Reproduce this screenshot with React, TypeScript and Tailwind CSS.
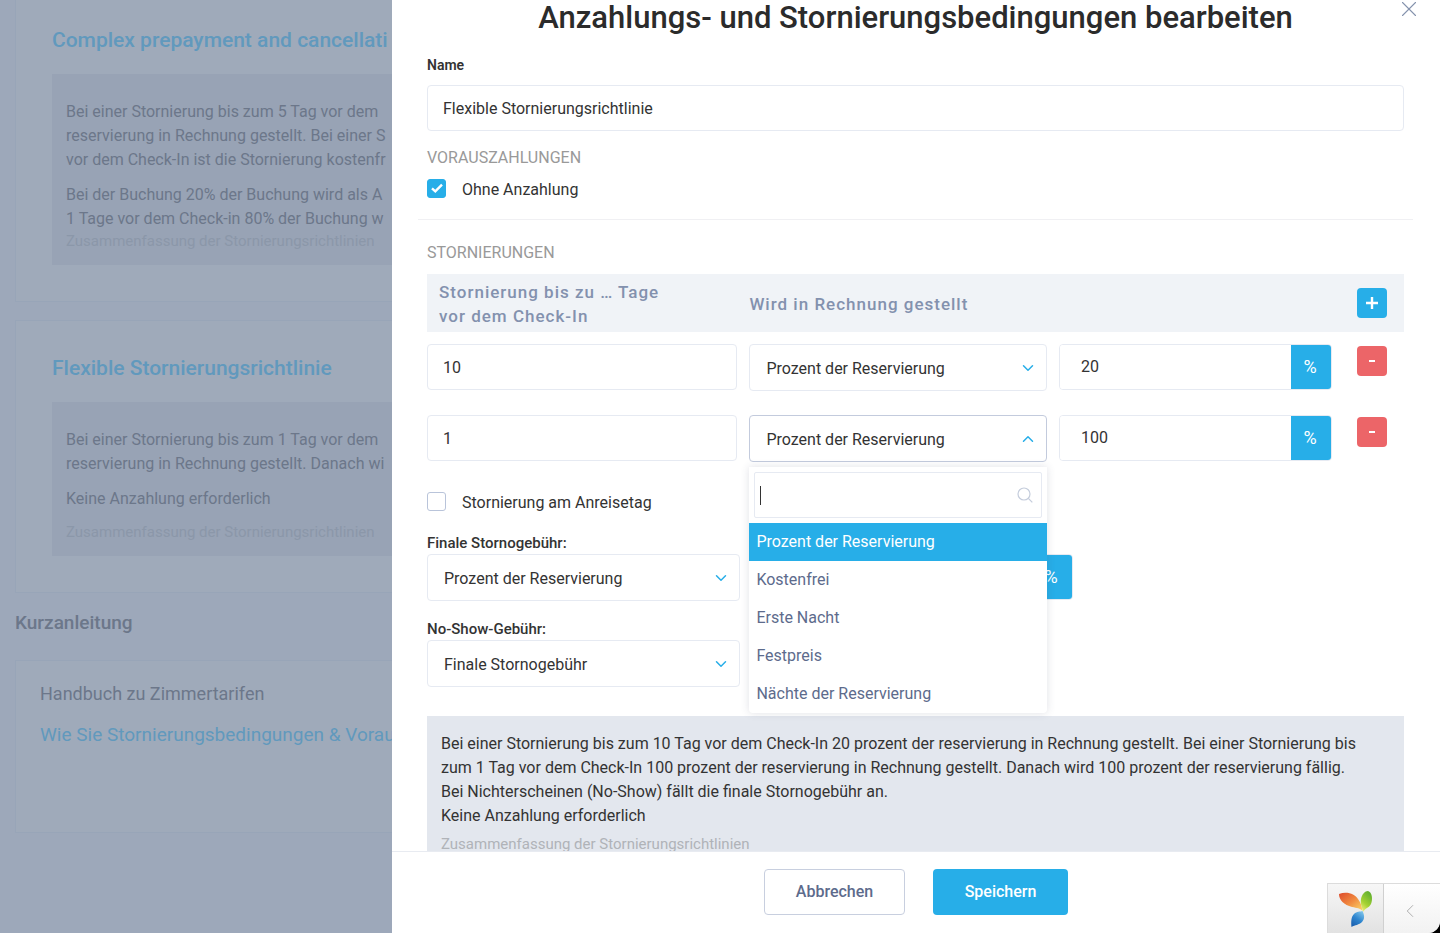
import { ReactNode } from 'react';
import { ChevronDown, ChevronLeft, ChevronUp, X } from 'lucide-react';
import clsx from 'clsx';

const feeTypes = [
  'Prozent der Reservierung',
  'Kostenfrei',
  'Erste Nacht',
  'Festpreis',
  'Nächte der Reservierung',
];

const cancellationRules = [
  { days: '10', amount: '20', open: false },
  { days: '1', amount: '100', open: true },
];

const inputClass =
  'h-[46px] w-full rounded-[4px] border border-[#e6eaf2] bg-white px-[15px] text-base text-[#333] outline-none';

// Select with its own chevron
const SelectBox = ({
  id,
  label,
  options,
  open = false,
}: {
  id: string;
  label?: string;
  options: string[];
  open?: boolean;
}) => (
  <div className="relative">
    <select
      id={id}
      aria-label={label}
      className={clsx(
        'block h-[47px] w-full appearance-none rounded-[4px] border bg-white pt-[2px] pr-10 pl-4 text-base text-[#333] outline-none',
        open ? 'border-[#c3cbdd]' : 'border-[#e6eaf2]'
      )}
    >
      {options.map((option) => (
        <option key={option}>{option}</option>
      ))}
    </select>
    <span className="pointer-events-none absolute inset-y-0 right-[10px] flex items-center text-[#27aee8]">
      {open ? <ChevronUp size={18} strokeWidth={2} /> : <ChevronDown size={18} strokeWidth={2} />}
    </span>
  </div>
);

const PercentInput = ({ label, value }: { label: string; value: string }) => (
  <div className="flex h-[46px] overflow-hidden rounded-[4px] border border-[#e6eaf2]">
    <input
      type="text"
      aria-label={label}
      defaultValue={value}
      className="min-w-0 flex-1 bg-white px-[21px] text-base text-[#333] outline-none"
    />
    <span className="flex w-10 shrink-0 items-center justify-center bg-[#27aee8] pr-[2px] text-lg text-white">%</span>
  </div>
);

const SearchIcon = () => (
  <svg width="16" height="16" viewBox="0 0 16 16" fill="none" stroke="#c5cddc" strokeWidth="1.2">
    <circle cx="7" cy="7" r="6" />
    <path d="M11.3 11.3 15.3 15.3" />
  </svg>
);

// Dropdown list of the opened fee select
const FeeDropdown = () => (
  <div className="absolute top-full right-3 left-0 z-10 -mt-[7px] rounded-b bg-white pt-[5px] shadow-[0_0_8px_rgba(60,70,100,0.16)]">
    <div className="relative mx-[5px] mb-[5px]">
      <input
        type="text"
        aria-label="Suche"
        className="block h-[46px] w-full rounded-[2px] border border-[#e6eaf2] bg-white pr-10 pl-[5px] text-base text-[#333] outline-none"
      />
      <span className="absolute top-[14px] left-[6px] h-[19px] w-px bg-[#333]" />
      <span className="absolute inset-y-0 right-[9px] flex items-center">
        <SearchIcon />
      </span>
    </div>
    <ul role="listbox">
      {feeTypes.map((type, i) => (
        <li
          key={type}
          role="option"
          aria-selected={i === 0}
          className={clsx(
            'flex h-[38px] items-center px-[7px] text-base',
            i === 0 ? 'bg-[#27aee8] text-white' : 'text-[#5d6b8c]'
          )}
        >
          {type}
        </li>
      ))}
    </ul>
  </div>
);

const Checkbox = ({ id, label, checked = false }: { id: string; label: string; checked?: boolean }) => (
  <div className="flex h-6 items-center gap-4">
    <span className="relative flex size-[19px] shrink-0">
      <input
        id={id}
        type="checkbox"
        defaultChecked={checked}
        className="peer size-[19px] appearance-none rounded-[3px] border border-[#b9c4da] bg-white checked:border-[#27aee8] checked:bg-[#27aee8]"
      />
      <svg
        viewBox="0 0 19 19"
        className="pointer-events-none absolute inset-0 hidden size-[19px] peer-checked:block"
        fill="none"
        stroke="#fff"
        strokeWidth="2.4"
      >
        <path d="M5 9.4 8.3 12.4 15 5.6" />
      </svg>
    </span>
    <label htmlFor={id} className="pt-1 text-base text-[#333]">
      {label}
    </label>
  </div>
);

const PolicyCard = ({ title, className, children }: { title: string; className: string; children: ReactNode }) => (
  <article className={clsx('border border-r-0 border-[#98a5b8] bg-[#9faaba] pl-9', className)}>
    <h3 className="text-[21px] leading-6 font-medium">
      <a href="#" className="text-[#6199bd]">
        {title}
      </a>
    </h3>
    {children}
  </article>
);

// Page behind the drawer, already tinted by the backdrop
const PageBehind = () => (
  <main className="w-[392px] shrink-0 overflow-hidden bg-[#9da8ba] pl-[15px] whitespace-nowrap text-[#6c778a]">
    <PolicyCard title="Complex prepayment and cancellati" className="h-[302px] border-t-0 pt-7">
      <div className="mt-[22px] h-[191px] bg-[#98a3b5] pt-[26px] pl-[14px] text-base leading-6">
        <p>
          Bei einer Stornierung bis zum 5 Tag vor dem
          <br />
          reservierung in Rechnung gestellt. Bei einer S
          <br />
          vor dem Check-In ist die Stornierung kostenfr
        </p>
        <p className="mt-[11px]">
          Bei der Buchung 20% der Buchung wird als A
          <br />1 Tage vor dem Check-in 80% der Buchung w
        </p>
        <p className="text-[15px] leading-5 text-[#8b97a9]">Zusammenfassung der Stornierungsrichtlinien</p>
      </div>
    </PolicyCard>

    <PolicyCard title="Flexible Stornierungsrichtlinie" className="mt-[18px] h-[273px] pt-[35px]">
      <div className="mt-[22px] h-[154px] bg-[#98a3b5] pt-[26px] pl-[14px] text-base leading-6">
        <p>
          Bei einer Stornierung bis zum 1 Tag vor dem
          <br />
          reservierung in Rechnung gestellt. Danach wi
        </p>
        <p className="mt-[11px]">Keine Anzahlung erforderlich</p>
        <p className="mt-[11px] text-[15px] leading-5 text-[#8b97a9]">Zusammenfassung der Stornierungsrichtlinien</p>
      </div>
    </PolicyCard>

    <h2 className="mt-[18px] text-[19px] leading-6 font-medium">Kurzanleitung</h2>
    <section className="mt-[25px] h-[173px] border border-r-0 border-[#98a5b8] bg-[#9faaba] pt-[21px] pl-6 text-lg leading-6">
      <p>Handbuch zu Zimmertarifen</p>
      <a href="#" className="mt-[17px] block text-[19px] text-[#6199bd]">
        Wie Sie Stornierungsbedingungen &amp; Vorau
      </a>
    </section>
  </main>
);

const YiiLogo = () => (
  <svg width="34" height="36" viewBox="0 0 34 36">
    <defs>
      <linearGradient id="yii-orange" x1="0" y1="0" x2="1" y2="1">
        <stop offset="0" stopColor="#dd4a2b" />
        <stop offset="0.5" stopColor="#f0893f" />
        <stop offset="1" stopColor="#fbd96b" />
      </linearGradient>
      <linearGradient id="yii-green" x1="0.7" y1="0" x2="0.2" y2="1">
        <stop offset="0" stopColor="#5fae2e" />
        <stop offset="0.6" stopColor="#a5d233" />
        <stop offset="1" stopColor="#f3ee7a" />
      </linearGradient>
      <linearGradient id="yii-blue" x1="0.8" y1="0" x2="0.2" y2="1">
        <stop offset="0" stopColor="#7fc4ea" />
        <stop offset="0.5" stopColor="#2f86cf" />
        <stop offset="1" stopColor="#1b5fae" />
      </linearGradient>
    </defs>
    <path d="M0 3C8 0 16 3 19 8C22 12 23 16 23.5 20C21 17 18 17 13 16C5 14 0 9 0 3Z" fill="url(#yii-orange)" />
    <path d="M29 0C33 1 34 8 32 13C30 17 26 17 24 21C23.500 17 21 13 22 8C23 3 26 0 29 0Z" fill="url(#yii-green)" />
    <path d="M23.500 20C25.500 24 26 28 23 31C20 34 16 34 12.500 36C12 31 12 26 15 23C18 20 21 21 23.500 20Z" fill="url(#yii-blue)" />
  </svg>
);

const DebugToolbar = () => (
  <div className="absolute right-0 bottom-0 bg-black">
    <div className="flex h-[50px] overflow-hidden rounded-br-xl border-t border-l border-[#dcdcdc] bg-white">
      <a
        href="#"
        aria-label="Yii Debugger"
        className="flex w-14 items-center justify-center border-r border-[#d0d0d0] bg-linear-to-b from-[#f7f7f7] to-[#e2e2e2]"
      >
        <YiiLogo />
      </a>
      <button
        type="button"
        aria-label="Toolbar einblenden"
        className="flex w-14 items-center justify-center bg-linear-to-b from-white to-[#f2f2f2] pt-1 pr-1 text-[#a8a8a8]"
      >
        <ChevronLeft size={22} strokeWidth={1} />
      </button>
    </div>
  </div>
);

const PolicyDrawer = () => (
  <section role="dialog" aria-labelledby="drawer-title" className="relative flex min-w-0 flex-1 flex-col bg-white">
    <button type="button" aria-label="Schließen" className="absolute -top-1 right-[18px] text-[#8593ad]">
      <X size={26} strokeWidth={1} />
    </button>

    <div className="min-h-0 flex-1 overflow-hidden pr-9 pl-[35px]">
      <h1 id="drawer-title" className="text-center text-[31px] leading-9 font-medium text-[#2b2b2b]">
        Anzahlungs- und Stornierungsbedingungen bearbeiten
      </h1>

      <label htmlFor="name" className="mt-[19px] block text-sm leading-5 font-semibold text-[#333]">
        Name
      </label>
      <input id="name" type="text" defaultValue="Flexible Stornierungsrichtlinie" className={clsx(inputClass, 'mt-[10px] block')} />

      <h2 className="mt-[15px] text-base leading-6 text-[#999] uppercase">Vorauszahlungen</h2>
      <div className="mt-[6px]">
        <Checkbox id="no-prepayment" label="Ohne Anzahlung" checked />
      </div>

      <hr className="-mx-[9px] mt-[19px] border-[#f0f0f3]" />

      <h2 className="mt-[21px] text-base leading-6 text-[#999] uppercase">Stornierungen</h2>
      <table className="mt-[9px] w-full table-fixed">
        <thead>
          <tr className="bg-[#f0f3f7] text-left text-[17px] leading-6 tracking-[1px] text-[#8391ae]">
            <th className="w-[33%] pt-[6px] pb-1 pl-3 font-medium">
              Stornierung bis zu … Tage
              <br />
              vor dem Check-In
            </th>
            <th className="pt-[2px] font-medium">Wird in Rechnung gestellt</th>
            <th className="w-[298px]" />
            <th className="w-[47px]">
              <button
                type="button"
                aria-label="Regel hinzufügen"
                className="flex size-[30px] items-center justify-center rounded-[4px] bg-[#27aee8]"
              >
                <svg width="12" height="12" viewBox="0 0 12 12" stroke="#fff" strokeWidth="2.4">
                  <path d="M6 0V12M0 6H12" />
                </svg>
              </button>
            </th>
          </tr>
        </thead>
        <tbody>
          {cancellationRules.map((rule) => (
            <tr key={rule.days} className="align-top">
              <td className="py-3 pr-3">
                <input type="text" aria-label="Tage vor dem Check-In" defaultValue={rule.days} className={inputClass} />
              </td>
              <td className="relative py-3 pr-3">
                <SelectBox id={`fee-${rule.days}`} label="Wird in Rechnung gestellt" options={feeTypes} open={rule.open} />
                {rule.open && <FeeDropdown />}
              </td>
              <td className="py-3 pr-[25px]">
                <PercentInput label="Prozentsatz" value={rule.amount} />
              </td>
              <td className="py-[14px]">
                <button
                  type="button"
                  aria-label="Regel entfernen"
                  className="flex size-[30px] items-center justify-center rounded-[4px] bg-[#ec6568]"
                >
                  <svg width="6" height="2" viewBox="0 0 6 2" stroke="#fff" strokeWidth="2">
                    <path d="M0 1H6" />
                  </svg>
                </button>
              </td>
            </tr>
          ))}
        </tbody>
      </table>

      <div className="mt-[15px]">
        <Checkbox id="arrival-day" label="Stornierung am Anreisetag" />
      </div>

      <label htmlFor="final-fee" className="mt-5 block text-[15px] leading-5 font-medium text-[#333]">
        Finale Stornogebühr:
      </label>
      <div className="mt-px flex gap-[11px]">
        <div className="w-[32%]">
          <SelectBox id="final-fee" options={feeTypes} />
        </div>
        <div className="w-[33%]">
          <PercentInput label="Finaler Prozentsatz" value="" />
        </div>
      </div>

      <label htmlFor="no-show-fee" className="mt-[18px] block text-[15px] leading-5 font-medium text-[#333]">
        No-Show-Gebühr:
      </label>
      <div className="mt-px w-[32%]">
        <SelectBox id="no-show-fee" options={['Finale Stornogebühr']} />
      </div>

      <div className="mt-[29px] bg-[#e3e7ee] px-[14px] pt-4 pb-6 text-base leading-6 text-[#333]">
        <p>
          Bei einer Stornierung bis zum 10 Tag vor dem Check-In 20 prozent der reservierung in Rechnung gestellt. Bei
          einer Stornierung bis zum 1 Tag vor dem Check-In 100 prozent der reservierung in Rechnung gestellt. Danach
          wird 100 prozent der reservierung fällig.
          <br />
          Bei Nichterscheinen (No-Show) fällt die finale Stornogebühr an.
        </p>
        <p>Keine Anzahlung erforderlich</p>
        <p className="mt-[6px] text-[15px] leading-5 text-[#b0b3b8]">Zusammenfassung der Stornierungsrichtlinien</p>
      </div>
    </div>

    <footer className="flex h-[82px] shrink-0 items-center justify-center gap-7 border-t border-[#e8ebf1] bg-white pb-[2px]">
      <button
        type="button"
        className="h-[46px] w-[141px] rounded-[4px] border border-[#c8cfdf] bg-white text-base font-medium text-[#5d6b8c]"
      >
        Abbrechen
      </button>
      <button type="button" className="h-[46px] w-[135px] rounded-[4px] bg-[#27aee8] text-base font-medium text-white">
        Speichern
      </button>
    </footer>
  </section>
);

export default function App() {
  return (
    <div className="relative flex h-screen overflow-hidden font-[Roboto,sans-serif]">
      <PageBehind />
      <PolicyDrawer />
      <DebugToolbar />
    </div>
  );
}
